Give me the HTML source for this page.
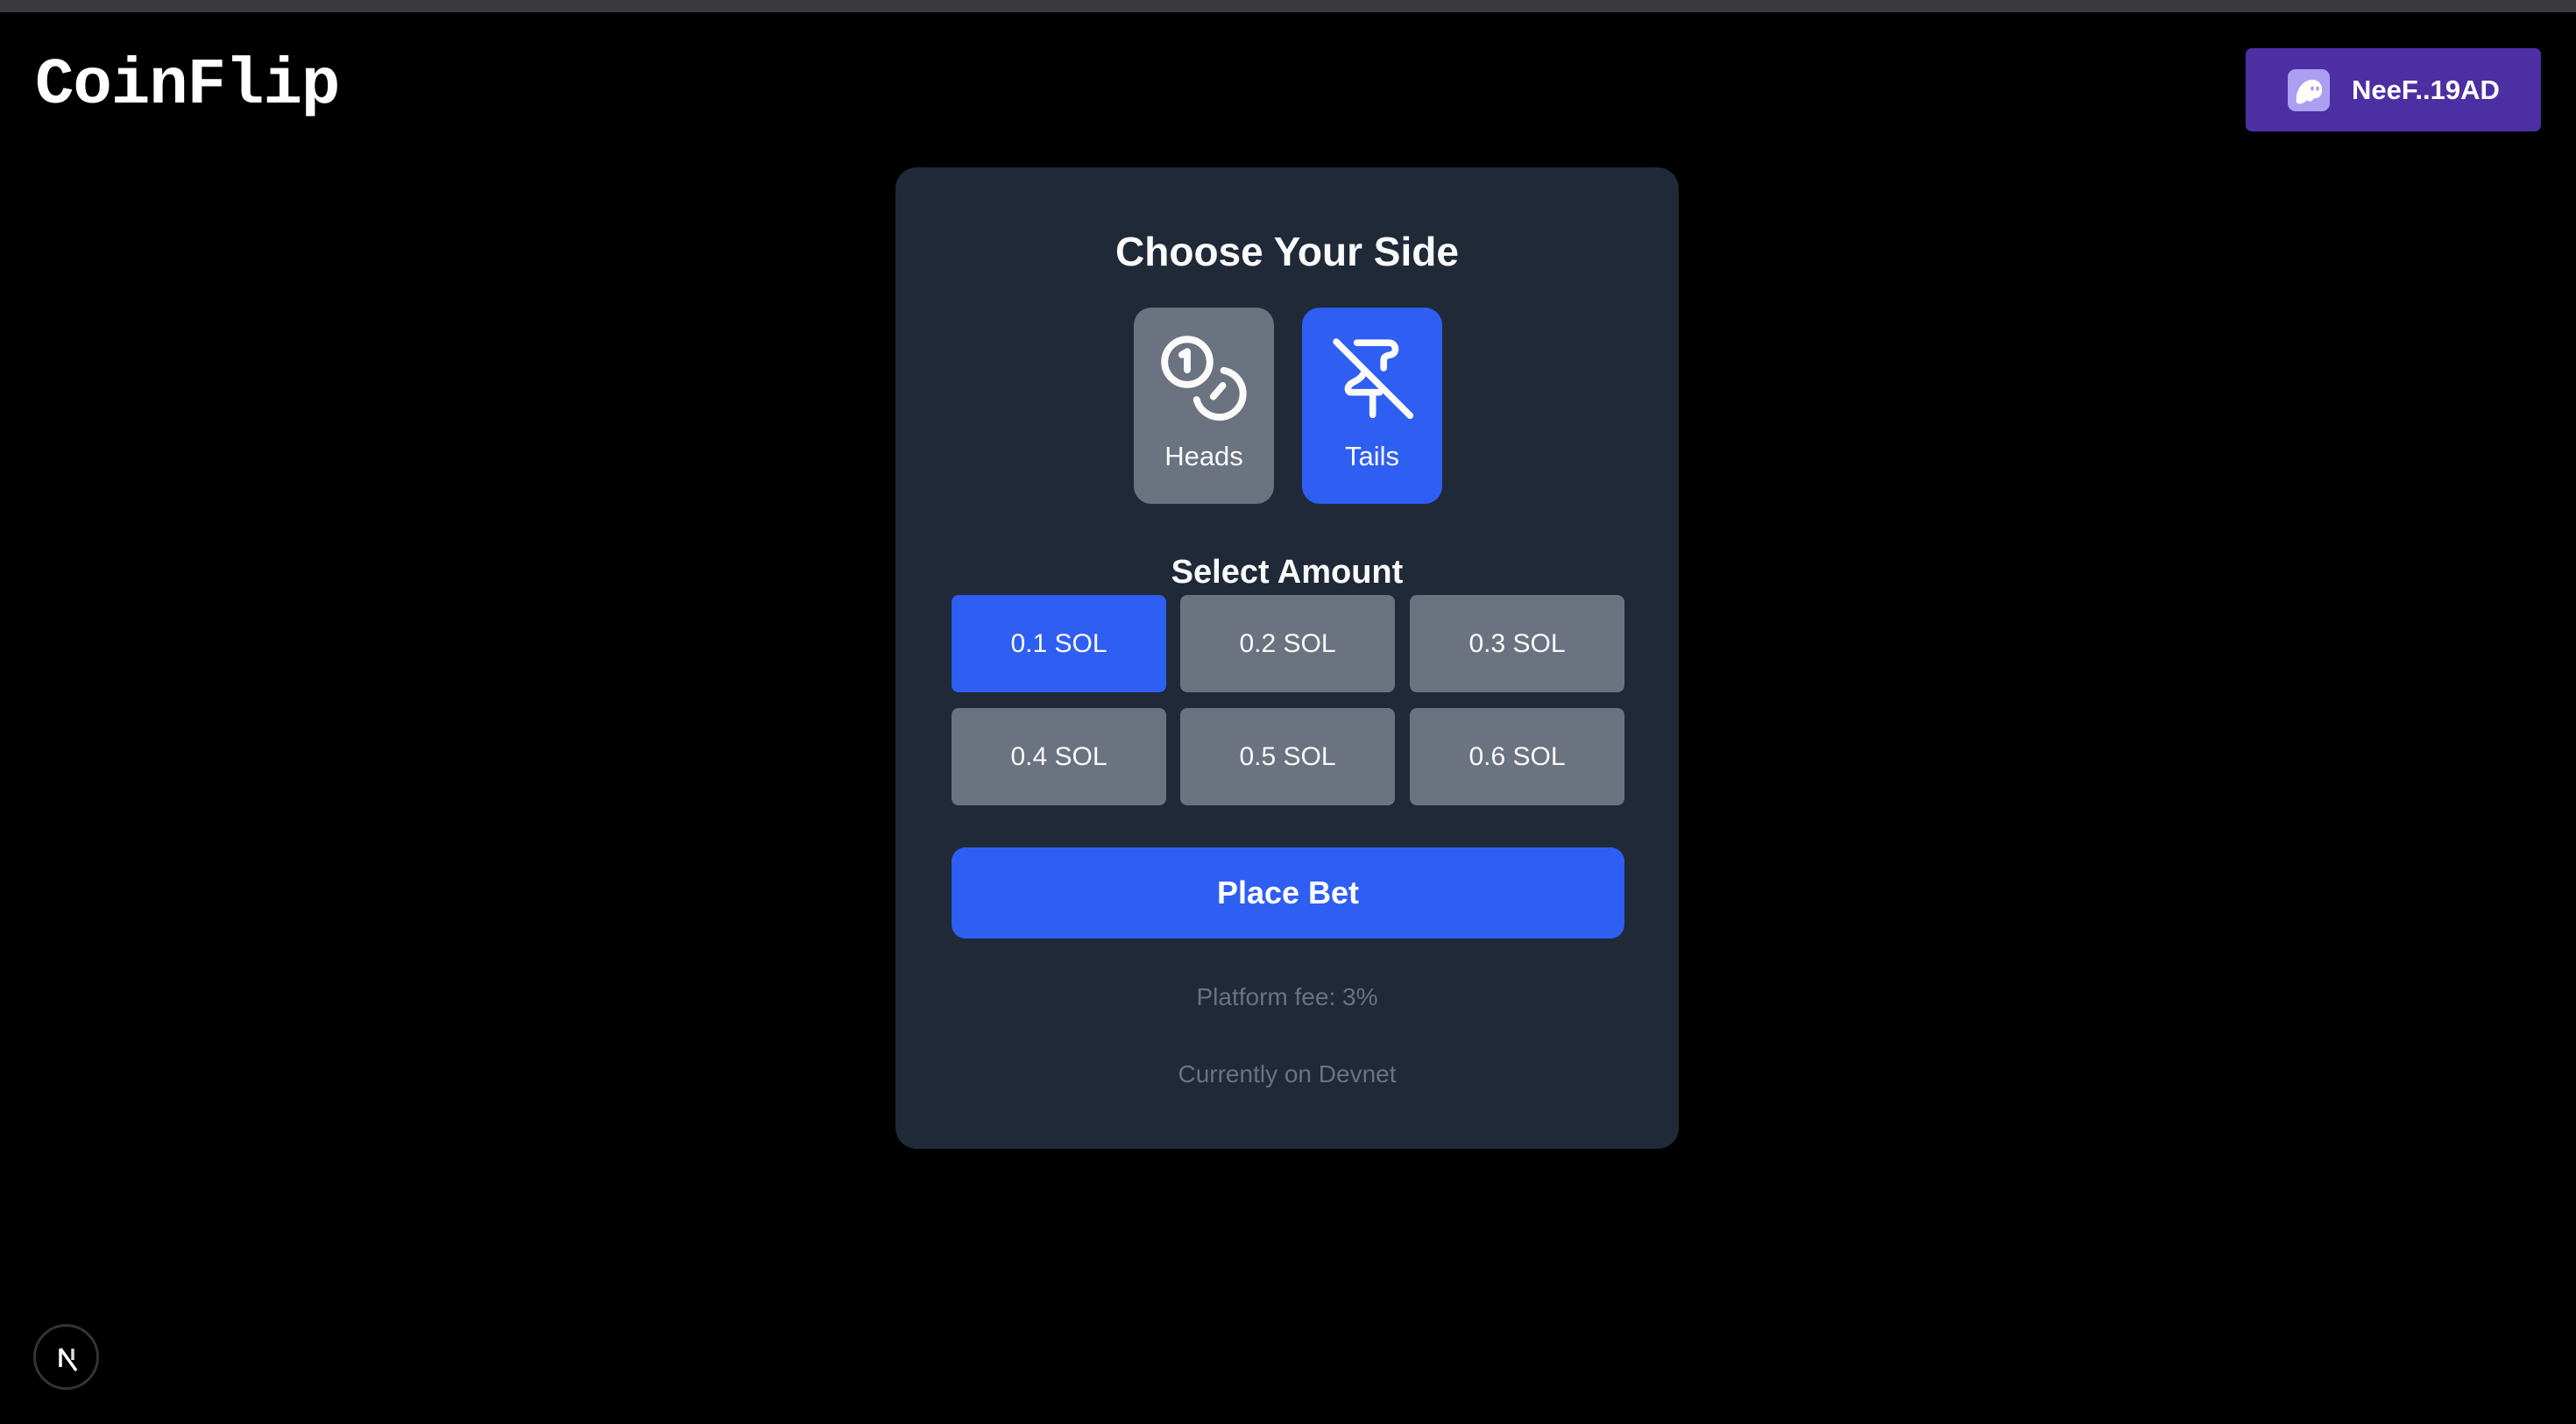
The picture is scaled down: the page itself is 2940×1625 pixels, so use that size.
<!DOCTYPE html>
<html><head><meta charset="utf-8"><style>
*{margin:0;padding:0;box-sizing:border-box}
html,body{width:2940px;height:1625px;background:#000;overflow:hidden;font-family:"Liberation Sans",sans-serif;color:#fafafa}
.topbar{position:absolute;left:0;top:0;width:2940px;height:14px;background:#3a393f}
.logo{position:absolute;left:40px;top:55px;font-family:"Liberation Mono",monospace;font-weight:bold;font-size:74px;line-height:86px;color:#fff;letter-spacing:-1px}
.wallet{position:absolute;left:2563px;top:55px;width:337px;height:95px;background:#4c2fa2;border-radius:7px}
.wicon{position:absolute;left:48px;top:24px;width:48px;height:48px;background:#ab9ff2;border-radius:9px}
.wtext{position:absolute;left:121px;top:0;line-height:95px;font-size:31px;font-weight:bold;color:#fff}
.card{position:absolute;left:1022px;top:191px;width:894px;height:1120px;background:#1f2937;border-radius:24px}
.h{position:absolute;left:0;width:894px;text-align:center;font-weight:bold;color:#fafafa}
.side{position:absolute;top:160px;width:160px;height:224px;border-radius:20px}
.side span{position:absolute;left:0;width:160px;top:152px;text-align:center;font-size:31px;color:#fafafa}
.side svg{position:absolute;left:28px;top:28px}
.amt{position:absolute;width:245px;height:111px;border-radius:8px;background:#6b7280;text-align:center;line-height:111px;font-size:30px;color:#fafafa}
.blue{background:#2f5ef2}
.bet{position:absolute;left:64px;top:776px;width:768px;height:104px;border-radius:16px;background:#2f5ef2;text-align:center;line-height:104px;font-size:36px;font-weight:bold;color:#fff}
.g{position:absolute;left:0;width:894px;text-align:center;font-size:28px;color:#6b7280}
.next{position:absolute;left:38px;top:1511px;width:75px;height:75px;border-radius:50%;border:3px solid #333;background:#000}
</style></head><body>
<div class="topbar"></div>
<div class="logo">CoinFlip</div>
<div class="wallet"><div class="wicon"><svg width="48" height="48" viewBox="0 0 48 48"><path d="M10 38 C8 26 16 12 28 12 C36 12 40 18 39 26 C38 32 33 34 30 33 C28 37 24 38 22 35 C19 39 13 41 10 38Z" fill="#fffdf8"/><ellipse cx="28" cy="22" rx="1.8" ry="2.6" fill="#ab9ff2"/><ellipse cx="34" cy="22" rx="1.8" ry="2.6" fill="#ab9ff2"/></svg></div><div class="wtext">NeeF..19AD</div></div>

<div class="card">
  <div class="h" style="top:64px;font-size:46px;line-height:64px">Choose Your Side</div>
  <div class="side" style="left:272px;background:#6b7280">
    <svg width="104" height="104" viewBox="140 130 290 290" fill="none" stroke="#fafafa" stroke-width="22" stroke-linecap="round" stroke-linejoin="round">
      <circle cx="232" cy="225" r="72"/>
      <path d="M215 202 L232 192 L232 250"/>
      <path d="M348 252 A75 75 0 1 1 262 345"/>
      <path d="M315 335 L345 300"/>
    </svg>
    <span>Heads</span>
  </div>
  <div class="side" style="left:464px;background:#2f5ef2">
    <svg width="104" height="104" viewBox="705 120 300 300" fill="none" stroke="#fafafa" stroke-width="22" stroke-linecap="round" stroke-linejoin="round">
      <path d="M737 152 L980 395"/>
      <path d="M805 155 L910 155 C935 155 940 190 915 195 C895 198 893 205 893 215 L893 238"/>
      <path d="M828 255 C815 280 790 282 780 295 C772 305 775 318 785 318 L880 318"/>
      <path d="M857 318 L857 392"/>
    </svg>
    <span>Tails</span>
  </div>
  <div class="h" style="top:434px;font-size:38px;line-height:56px">Select Amount</div>
  <div class="amt blue" style="left:64px;top:488px">0.1 SOL</div>
  <div class="amt" style="left:325px;top:488px">0.2 SOL</div>
  <div class="amt" style="left:587px;top:488px">0.3 SOL</div>
  <div class="amt" style="left:64px;top:617px">0.4 SOL</div>
  <div class="amt" style="left:325px;top:617px">0.5 SOL</div>
  <div class="amt" style="left:587px;top:617px">0.6 SOL</div>
  <div class="bet">Place Bet</div>
  <div class="g" style="top:929px;line-height:36px">Platform fee: 3%</div>
  <div class="g" style="top:1017px;line-height:36px">Currently on Devnet</div>
</div>

<div class="next"><svg width="69" height="69" viewBox="0 0 69 69"><path d="M28 25 L28 46" stroke="#fff" stroke-width="3.5"/><path d="M28 25 L46 50" stroke="#fff" stroke-width="3.5"/><path d="M42 25 L42 38" stroke="#ddd" stroke-width="3.5"/></svg></div>
</body></html>
